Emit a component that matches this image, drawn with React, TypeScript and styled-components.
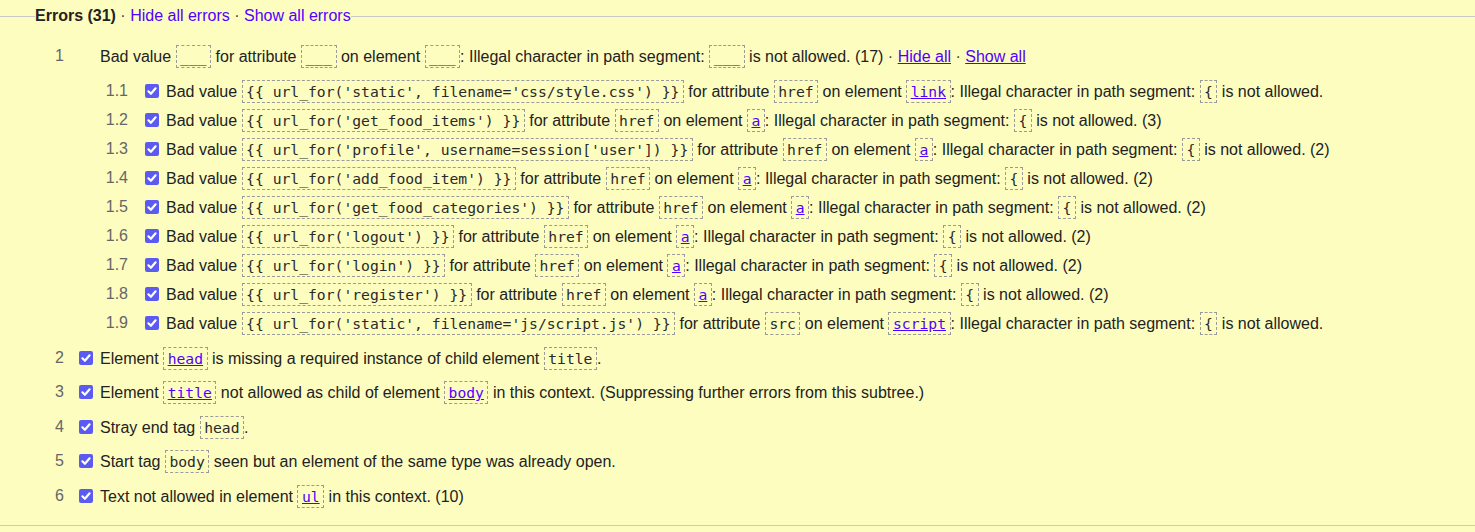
import React from 'react'
import styled, { createGlobalStyle } from 'styled-components'

const GlobalStyle = createGlobalStyle`
  body {
    margin: 0;
    background: #fdfdc0;
    font-family: 'Liberation Sans', Arial, sans-serif;
    font-size: 16px;
    color: #222;
  }
`

const Fieldset = styled.fieldset`
  margin: 7px 0 0 0;
  padding: 14px 0 12px 0;
  min-width: 0;
  border: none;
  border-top: 1px solid #c9c9c9;
  border-bottom: 1px solid #c9c9c9;
`

const Legend = styled.legend`
  margin-left: 35px;
  padding: 0;
  line-height: 18px;
`

const LegendTitle = styled.strong`
  font-weight: bold;
`

const Sep = styled.span`
  color: #444;
`

const Link = styled.a<{ $underline?: boolean }>`
  color: #5200ff;
  text-decoration: ${(props) => (props.$underline ? 'underline' : 'none')};
  cursor: pointer;
`

const List = styled.ol`
  list-style: none;
  margin: 0;
  padding: 0 0 0 34px;
`

const SubList = styled.ol`
  list-style: none;
  margin: 0;
  padding: 3px 0 3px 64px;
`

const Row = styled.div<{ $height: number }>`
  display: flex;
  align-items: center;
  height: ${(props) => props.$height}px;
  white-space: nowrap;
`

const Num = styled.span<{ $gap: number }>`
  width: 30px;
  text-align: right;
  color: #666;
  margin-right: ${(props) => props.$gap}px;
  flex: none;
`

const CheckBox = styled.span<{ $empty?: boolean }>`
  width: 14px;
  height: 14px;
  border-radius: 2px;
  background: ${(props) => (props.$empty ? 'transparent' : '#5b5bf2')};
  margin-right: 7px;
  flex: none;
  display: flex;
  align-items: center;
  justify-content: center;
`

const Message = styled.span`
  line-height: 23px;
  padding-top: 1px;
`

const Code = styled.code`
  display: inline-block;
  font-family: 'DejaVu Sans Mono', 'Liberation Mono', monospace;
  font-size: 14.7px;
  line-height: 21px;
  padding: 0 3.5px;
  border: 1px dashed #9a9a9a;
  color: #2a2a2a;
  vertical-align: middle;
  margin-top: -2px;
`

const CodeLink = styled.a`
  color: #5200ff;
  text-decoration: underline;
`

const Check = () => (
  <CheckBox>
    <svg width="14" height="14" viewBox="0 0 14 14">
      <path d="M3.4 7.3 L5.9 9.8 L10.6 4.3" fill="none" stroke="#fff" strokeWidth="2.2" strokeLinecap="round" strokeLinejoin="round" />
    </svg>
  </CheckBox>
)

const badValue = (value: string, attr: string, el: string, count?: number) => (
  <>
    Bad value <Code>{value}</Code> for attribute <Code>{attr}</Code> on element{' '}
    <Code>
      <CodeLink>{el}</CodeLink>
    </Code>
    : Illegal character in path segment: <Code>{'{'}</Code> is not allowed.
    {count ? ` (${count})` : ''}
  </>
)

const subItems = [
  badValue("{{ url_for('static', filename='css/style.css') }}", 'href', 'link'),
  badValue("{{ url_for('get_food_items') }}", 'href', 'a', 3),
  badValue("{{ url_for('profile', username=session['user']) }}", 'href', 'a', 2),
  badValue("{{ url_for('add_food_item') }}", 'href', 'a', 2),
  badValue("{{ url_for('get_food_categories') }}", 'href', 'a', 2),
  badValue("{{ url_for('logout') }}", 'href', 'a', 2),
  badValue("{{ url_for('login') }}", 'href', 'a', 2),
  badValue("{{ url_for('register') }}", 'href', 'a', 2),
  badValue("{{ url_for('static', filename='js/script.js') }}", 'src', 'script'),
]

const topItems = [
  <>
    Element{' '}
    <Code>
      <CodeLink>head</CodeLink>
    </Code>{' '}
    is missing a required instance of child element <Code>title</Code>.
  </>,
  <>
    Element{' '}
    <Code>
      <CodeLink>title</CodeLink>
    </Code>{' '}
    not allowed as child of element{' '}
    <Code>
      <CodeLink>body</CodeLink>
    </Code>{' '}
    in this context. (Suppressing further errors from this subtree.)
  </>,
  <>
    Stray end tag <Code>head</Code>.
  </>,
  <>
    Start tag <Code>body</Code> seen but an element of the same type was already open.
  </>,
  <>
    Text not allowed in element{' '}
    <Code>
      <CodeLink>ul</CodeLink>
    </Code>{' '}
    in this context. (10)
  </>,
]

const App = () => (
  <>
    <GlobalStyle />
    <Fieldset>
      <Legend>
        <LegendTitle>Errors (31)</LegendTitle>
        <Sep> · </Sep>
        <Link>Hide all errors</Link>
        <Sep> · </Sep>
        <Link>Show all errors</Link>
      </Legend>
      <List>
        <li>
          <Row $height={34.5}>
            <Num $gap={15}>1</Num>
            <CheckBox $empty />
            <Message>
              Bad value <Code>___</Code> for attribute <Code>___</Code> on element <Code>___</Code>:
              Illegal character in path segment: <Code>___</Code> is not allowed. (17) <Sep>·</Sep>{' '}
              <Link $underline>Hide all</Link> <Sep>·</Sep> <Link $underline>Show all</Link>
            </Message>
          </Row>
          <SubList>
            {subItems.map((item, i) => (
              <li key={i}>
                <Row $height={29}>
                  <Num $gap={17}>1.{i + 1}</Num>
                  <Check />
                  <Message>{item}</Message>
                </Row>
              </li>
            ))}
          </SubList>
        </li>
        {topItems.map((item, i) => (
          <li key={i}>
            <Row $height={34.5}>
              <Num $gap={15}>{i + 2}</Num>
              <Check />
              <Message>{item}</Message>
            </Row>
          </li>
        ))}
      </List>
    </Fieldset>
  </>
)

export default App
